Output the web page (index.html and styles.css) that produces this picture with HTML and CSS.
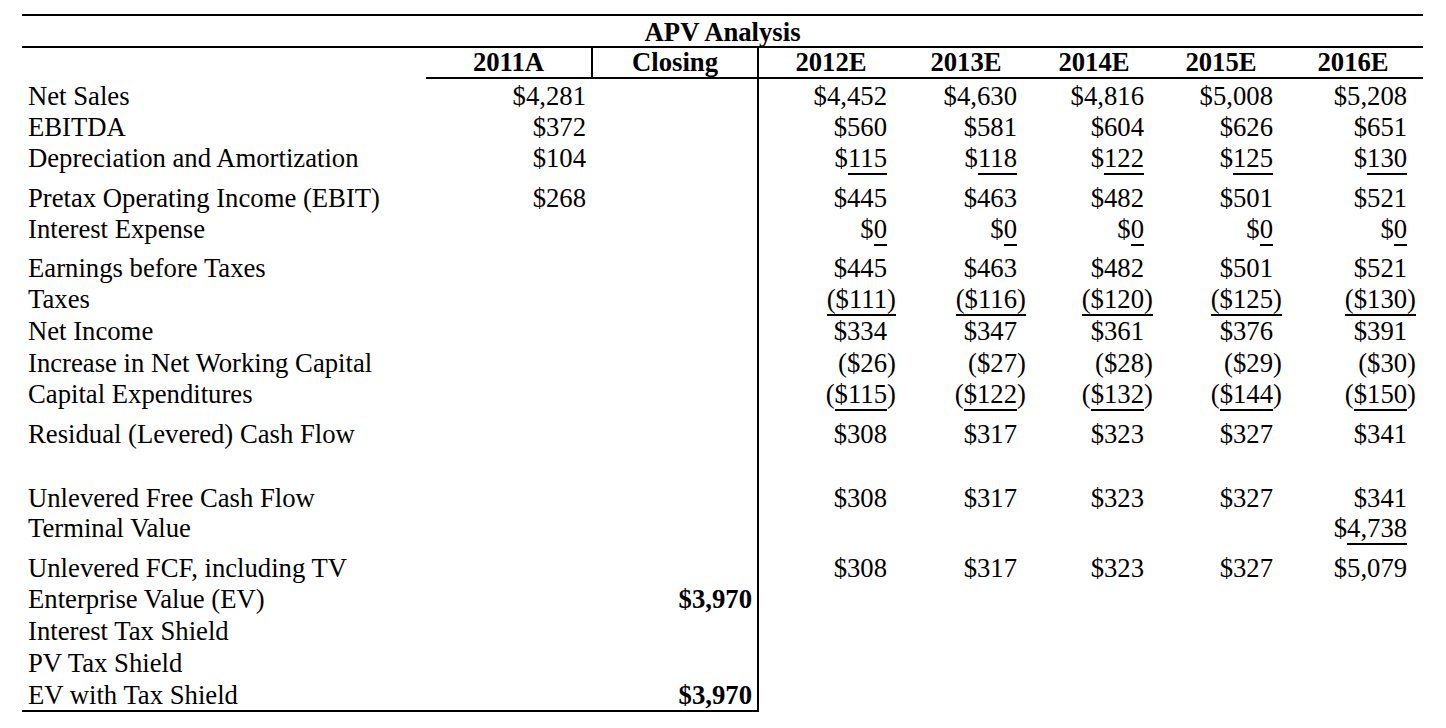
FILE: index.html
```html
<!DOCTYPE html>
<html lang="en">
<head>
<meta charset="utf-8">
<title>APV Analysis</title>
<link rel="stylesheet" href="styles.css">
</head>
<body>
<table class="apv">
  <colgroup>
    <col class="col-label">
    <col class="col-a">
    <col class="col-close">
    <col class="col-e1">
    <col class="col-e2">
    <col class="col-e3">
    <col class="col-e4">
    <col class="col-e5">
  </colgroup>
  <thead>
    <tr class="title-row">
      <th colspan="8">APV Analysis</th>
    </tr>
    <tr class="year-row">
      <th class="blank-head"></th>
      <th class="yr sep">2011A</th>
      <th class="yr sep">Closing</th>
      <th class="yr">2012E</th>
      <th class="yr">2013E</th>
      <th class="yr">2014E</th>
      <th class="yr">2015E</th>
      <th class="yr">2016E</th>
    </tr>
  </thead>
  <tbody>
    <tr class="first">
      <td>Net Sales</td><td>$4,281</td><td></td>
      <td>$4,452</td><td>$4,630</td><td>$4,816</td><td>$5,008</td><td>$5,208</td>
    </tr>
    <tr>
      <td>EBITDA</td><td>$372</td><td></td>
      <td>$560</td><td>$581</td><td>$604</td><td>$626</td><td>$651</td>
    </tr>
    <tr class="ul9">
      <td>Depreciation and Amortization</td><td>$104</td><td></td>
      <td>$<span class="ul">115</span></td><td>$<span class="ul">118</span></td><td>$<span class="ul">122</span></td><td>$<span class="ul">125</span></td><td>$<span class="ul">130</span></td>
    </tr>
    <tr>
      <td>Pretax Operating Income (EBIT)</td><td>$268</td><td></td>
      <td>$445</td><td>$463</td><td>$482</td><td>$501</td><td>$521</td>
    </tr>
    <tr class="ul8">
      <td>Interest Expense</td><td></td><td></td>
      <td>$<span class="ul">0</span></td><td>$<span class="ul">0</span></td><td>$<span class="ul">0</span></td><td>$<span class="ul">0</span></td><td>$<span class="ul">0</span></td>
    </tr>
    <tr>
      <td>Earnings before Taxes</td><td></td><td></td>
      <td>$445</td><td>$463</td><td>$482</td><td>$501</td><td>$521</td>
    </tr>
    <tr class="pb1">
      <td>Taxes</td><td></td><td></td>
      <td><span class="neg ul">($111)</span></td><td><span class="neg ul">($116)</span></td><td><span class="neg ul">($120)</span></td><td><span class="neg ul">($125)</span></td><td><span class="neg ul">($130)</span></td>
    </tr>
    <tr class="pb1">
      <td>Net Income</td><td></td><td></td>
      <td>$334</td><td>$347</td><td>$361</td><td>$376</td><td>$391</td>
    </tr>
    <tr>
      <td>Increase in Net Working Capital</td><td></td><td></td>
      <td><span class="neg">($26)</span></td><td><span class="neg">($27)</span></td><td><span class="neg">($28)</span></td><td><span class="neg">($29)</span></td><td><span class="neg">($30)</span></td>
    </tr>
    <tr class="ul9">
      <td>Capital Expenditures</td><td></td><td></td>
      <td><span class="neg">(<span class="ul">$115</span>)</span></td><td><span class="neg">(<span class="ul">$122</span>)</span></td><td><span class="neg">(<span class="ul">$132</span>)</span></td><td><span class="neg">(<span class="ul">$144</span>)</span></td><td><span class="neg">(<span class="ul">$150</span>)</span></td>
    </tr>
    <tr>
      <td>Residual (Levered) Cash Flow</td><td></td><td></td>
      <td>$308</td><td>$317</td><td>$323</td><td>$327</td><td>$341</td>
    </tr>
    <tr class="spacer">
      <td></td><td></td><td></td><td></td><td></td><td></td><td></td><td></td>
    </tr>
    <tr class="short">
      <td>Unlevered Free Cash Flow</td><td></td><td></td>
      <td>$308</td><td>$317</td><td>$323</td><td>$327</td><td>$341</td>
    </tr>
    <tr class="ul9">
      <td>Terminal Value</td><td></td><td></td>
      <td></td><td></td><td></td><td></td><td>$<span class="ul">4,738</span></td>
    </tr>
    <tr>
      <td>Unlevered FCF, including TV</td><td></td><td></td>
      <td>$308</td><td>$317</td><td>$323</td><td>$327</td><td>$5,079</td>
    </tr>
    <tr class="pb1">
      <td>Enterprise Value (EV)</td><td></td><td class="strong">$3,970</td>
      <td></td><td></td><td></td><td></td><td></td>
    </tr>
    <tr class="pb1">
      <td>Interest Tax Shield</td><td></td><td></td>
      <td></td><td></td><td></td><td></td><td></td>
    </tr>
    <tr class="pb2">
      <td>PV Tax Shield</td><td></td><td></td>
      <td></td><td></td><td></td><td></td><td></td>
    </tr>
    <tr class="short last">
      <td>EV with Tax Shield</td><td></td><td class="strong">$3,970</td>
      <td></td><td></td><td></td><td></td><td></td>
    </tr>
  </tbody>
</table>
</body>
</html>
```
FILE: styles.css
```css
html, body {
  margin: 0;
  padding: 0;
  background: #ffffff;
}

body {
  font-family: "Liberation Serif", "Times New Roman", serif;
  font-size: 26.7px;
  color: #000000;
}

.apv {
  border-collapse: separate;
  border-spacing: 0;
  table-layout: fixed;
  width: 1401px;
  margin: 14px 0 0 22px;
}

.col-label { width: 404px; }
.col-a { width: 167px; }
.col-close { width: 166px; }
.col-e1 { width: 144px; }
.col-e2 { width: 126px; }
.col-e3 { width: 130px; }
.col-e4 { width: 124px; }
.col-e5 { width: 140px; }

.apv th,
.apv td {
  padding: 0;
  line-height: 31px;
  white-space: nowrap;
  vertical-align: top;
}

/* header */
.title-row th {
  font-weight: bold;
  text-align: center;
  border-top: 2px solid #000;
  border-bottom: 2px solid #000;
  padding-top: 3px;
  line-height: 27px;
}

.year-row th {
  font-weight: bold;
  text-align: center;
  line-height: 29px;
}

.year-row .yr {
  border-bottom: 2px solid #000;
}

.year-row .sep {
  border-right: 2px solid #000;
}

/* body cells */
.apv tbody td {
  text-align: right;
}

.apv tbody td:nth-child(1) {
  text-align: left;
  padding-left: 6px;
}

.apv tbody td:nth-child(2) { padding-right: 7px; }
.apv tbody td:nth-child(3) { padding-right: 5px; border-right: 2px solid #000; }
.apv tbody td:nth-child(4) { padding-right: 16px; }
.apv tbody td:nth-child(5) { padding-right: 12px; }
.apv tbody td:nth-child(6) { padding-right: 15px; }
.apv tbody td:nth-child(7) { padding-right: 10px; }
.apv tbody td:nth-child(8) { padding-right: 16px; }

/* row spacing */
.first td { padding-top: 2px; }
.ul9 td { padding-bottom: 9px; }
.ul8 td { padding-bottom: 8px; }
.pb1 td { padding-bottom: 1px; }
.pb2 td { padding-bottom: 2px; }
.spacer td { height: 34px; line-height: 34px; }
.short td { line-height: 29px; }

.last td:nth-child(-n+3) {
  border-bottom: 2px solid #000;
}

/* number formatting */
.neg {
  margin-right: -0.333em;
}

.ul {
  border-bottom: 2px solid #000;
}

.strong {
  font-weight: bold;
}
```
